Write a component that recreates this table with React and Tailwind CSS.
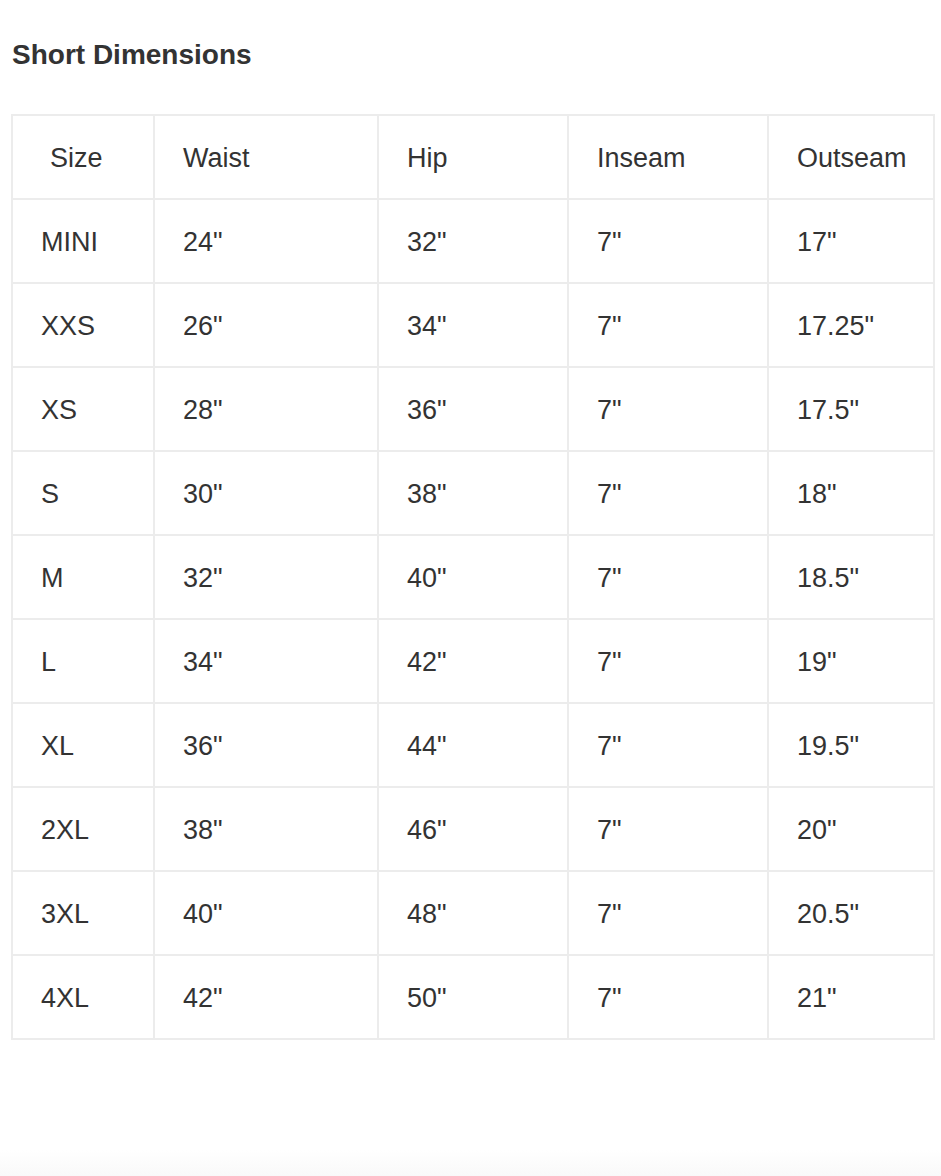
import React from "react";

const rows = [
  ["MINI", '24"', '32"', '7"', '17"'],
  ["XXS", '26"', '34"', '7"', '17.25"'],
  ["XS", '28"', '36"', '7"', '17.5"'],
  ["S", '30"', '38"', '7"', '18"'],
  ["M", '32"', '40"', '7"', '18.5"'],
  ["L", '34"', '42"', '7"', '19"'],
  ["XL", '36"', '44"', '7"', '19.5"'],
  ["2XL", '38"', '46"', '7"', '20"'],
  ["3XL", '40"', '48"', '7"', '20.5"'],
  ["4XL", '42"', '50"', '7"', '21"'],
];

const cell = "border-2 border-[#ececec] h-[84px] pl-[28px] pt-[2px] align-middle text-left font-normal";

export default function App() {
  return (
    <div className="min-h-[1176px] bg-[linear-gradient(to_bottom,#ffffff_0,#ffffff_1150px,#f9f9f9_1176px)] font-['Liberation_Sans',Arial,sans-serif] text-[#333]">
      <div className="pt-[37px] pl-[11px] pr-[7px]">
        {/* heading */}
        <h2 className="pl-px text-[28px] font-bold leading-[36px]">Short Dimensions</h2>

        <table className="mt-[41px] w-[922px] border-collapse table-fixed text-[27px]">
          <colgroup>
            <col className="w-[142px]" />
            <col className="w-[224px]" />
            <col className="w-[190px]" />
            <col className="w-[200px]" />
            <col className="w-[166px]" />
          </colgroup>
          <thead>
            <tr>
              <th className={cell + " pl-[37px]"}>Size</th>
              <th className={cell}>Waist</th>
              <th className={cell}>Hip</th>
              <th className={cell}>Inseam</th>
              <th className={cell}>Outseam</th>
            </tr>
          </thead>
          <tbody>
            {rows.map((r) => (
              <tr key={r[0]}>
                {r.map((v, i) => (
                  <td key={i} className={cell}>{v}</td>
                ))}
              </tr>
            ))}
          </tbody>
        </table>
      </div>
    </div>
  );
}
